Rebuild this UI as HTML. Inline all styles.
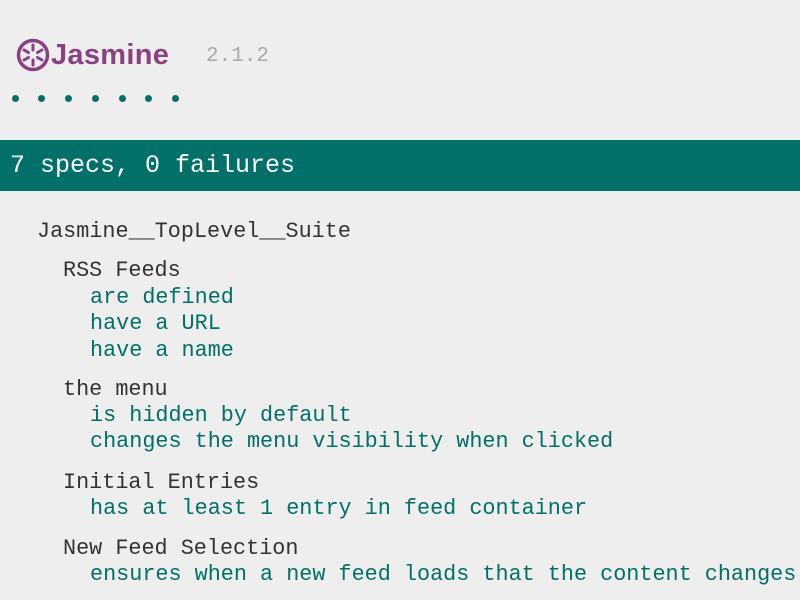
<!DOCTYPE html>
<html><head><meta charset="utf-8"><style>
body{margin:0;width:800px;height:600px;background:#eeeeee;overflow:hidden;position:relative;font-family:"Liberation Mono",monospace;}
.l{position:absolute;font-size:21.8px;line-height:26px;white-space:pre;}
.s{color:#333;}
.p{color:#007069;}
.banner{position:absolute;left:0;top:140px;width:800px;height:51px;background:#007069;color:#fff;font-size:25px;line-height:51px;padding-left:10px;box-sizing:border-box;white-space:pre;}
.dot{position:absolute;top:95px;width:7px;height:7px;border-radius:50%;background:#007069;}
</style></head><body>
<svg style="position:absolute;left:16px;top:38px" width="34" height="34" viewBox="0 0 34 34">
<circle cx="17" cy="17" r="14.5" fill="none" stroke="#8a4182" stroke-width="3.5"/>
<g stroke="#8a4182" stroke-width="3" stroke-linecap="round">
<line x1="17" y1="7" x2="17" y2="12"/><line x1="17" y1="22" x2="17" y2="27"/>
<line x1="8" y1="12" x2="12.5" y2="14.5"/><line x1="21.5" y1="19.5" x2="26" y2="22"/>
<line x1="8" y1="22" x2="12.5" y2="19.5"/><line x1="21.5" y1="14.5" x2="26" y2="12"/>
</g></svg>
<div style="position:absolute;left:51px;top:37px;font-family:'Liberation Sans',sans-serif;font-weight:bold;font-size:29px;color:#8a4182;line-height:36px;letter-spacing:0.3px;">Jasmine</div>
<div class="l" style="left:206px;top:44px;color:#aaa;font-size:21px;">2.1.2</div>
<div class="dot" style="left:12px"></div><div class="dot" style="left:38px"></div><div class="dot" style="left:65px"></div><div class="dot" style="left:92px"></div><div class="dot" style="left:119px"></div><div class="dot" style="left:145px"></div><div class="dot" style="left:172px"></div>
<div class="banner">7 specs, 0 failures</div>
<div class="l s" style="left:37px;top:219px">Jasmine__TopLevel__Suite</div>
<div class="l s" style="left:63px;top:258px">RSS Feeds</div>
<div class="l p" style="left:90px;top:285px">are defined</div>
<div class="l p" style="left:90px;top:311px">have a URL</div>
<div class="l p" style="left:90px;top:338px">have a name</div>
<div class="l s" style="left:63px;top:377px">the menu</div>
<div class="l p" style="left:90px;top:403px">is hidden by default</div>
<div class="l p" style="left:90px;top:429px">changes the menu visibility when clicked</div>
<div class="l s" style="left:63px;top:470px">Initial Entries</div>
<div class="l p" style="left:90px;top:496px">has at least 1 entry in feed container</div>
<div class="l s" style="left:63px;top:536px">New Feed Selection</div>
<div class="l p" style="left:90px;top:562px">ensures when a new feed loads that the content changes</div>
</body></html>
